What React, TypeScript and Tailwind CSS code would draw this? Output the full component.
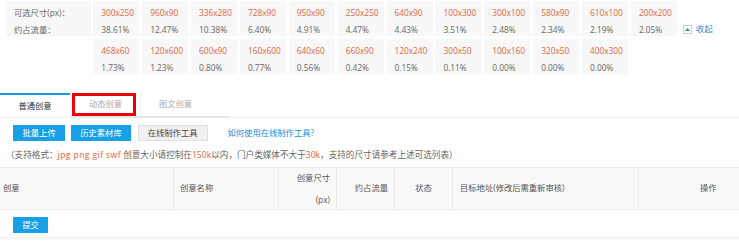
import React from "react";

const row1 = [
  ["300x250", "38.61%"],
  ["960x90", "12.47%"],
  ["336x280", "10.38%"],
  ["728x90", "6.40%"],
  ["950x90", "4.91%"],
  ["250x250", "4.47%"],
  ["640x90", "4.43%"],
  ["100x300", "3.51%"],
  ["300x100", "2.48%"],
  ["580x90", "2.34%"],
  ["610x100", "2.19%"],
  ["200x200", "2.05%"],
];
const row2 = [
  ["468x60", "1.73%"],
  ["120x600", "1.23%"],
  ["600x90", "0.80%"],
  ["160x600", "0.77%"],
  ["640x60", "0.56%"],
  ["660x90", "0.42%"],
  ["120x240", "0.15%"],
  ["300x50", "0.11%"],
  ["100x160", "0.00%"],
  ["320x50", "0.00%"],
  ["400x300", "0.00%"],
];

function Cell({ s, p }: { s: string; p: string }) {
  return (
    <div className="w-[46.2px] h-[35px] shrink-0 bg-[#f8f8f8] pl-[8px] pt-[3px] leading-[17px] whitespace-nowrap">
      <div className="text-[#e4643b]">{s}</div>
      <div className="text-[#666]">{p}</div>
    </div>
  );
}

export default function App() {
  return (
    <div className="relative w-[739px] h-[245px] overflow-hidden bg-white text-[8.3px] text-[#666] font-['Open_Sans','Noto_Sans_CJK_SC',sans-serif] [text-spacing-trim:space-all]">
      {/* size list */}
      <div className="pt-[1px] pl-[6px] flex flex-col gap-[3px]">
        <div className="flex gap-[2.7px]">
          <div className="w-[84.6px] h-[35px] shrink-0 bg-[#f8f8f8] pl-[8px] pt-[3px] leading-[17px] text-[#666] whitespace-nowrap">
            <div>可选尺寸(px)：</div>
            <div>约占流量：</div>
          </div>
          {row1.map(([s, p]) => (
            <Cell key={s} s={s} p={p} />
          ))}
          <div className="ml-[3px] mt-[23px] flex items-center gap-[4px] h-[10px]">
            <span className="w-[9px] h-[9px] border border-[#cfcfcf] bg-white flex items-center justify-center">
              <svg width="5" height="3" viewBox="0 0 5 3">
                <path d="M0 3 L2.5 0 L5 3 Z" fill="#1a8fd8" />
              </svg>
            </span>
            <span className="text-[#1a8fd8] text-[8.5px]">收起</span>
          </div>
        </div>
        <div className="flex gap-[2.7px]">
          <div className="w-[84.6px] shrink-0" />
          {row2.map(([s, p]) => (
            <Cell key={s} s={s} p={p} />
          ))}
        </div>
      </div>

      {/* tabs */}
      <div className="mt-[19px] flex h-[25px] border-b border-[#f3f3f3]">
        <div className="w-[70px] h-[25px] border-t-2 border-[#1a9de0] flex items-center justify-center text-[#333]">
          普通创意
        </div>
        <div className="relative w-[70px] h-[25px] border-l border-[#eeeeee] border-b-2 border-b-[#e6e6e6] flex items-center justify-center text-[#aaa]">
          动态创意
          <div className="absolute left-[1px] top-0 w-[64px] h-[23px] border-[3px] border-[#e8000b]" />
        </div>
        <div className="w-[70px] h-[25px] border-l border-[#eeeeee] border-b-2 border-b-[#e6e6e6] flex items-center justify-center text-[#aaa]">
          图文创意
        </div>
        <div className="w-[20px] h-[25px] border-b-2 border-b-[#e6e6e6]" />
      </div>

      {/* buttons */}
      <div className="mt-[7px] pl-[13px] flex items-center h-[16px]">
        <div className="h-[16px] px-[9.5px] bg-[#18a0e6] text-white flex items-center">批量上传</div>
        <div className="ml-[6px] h-[16px] px-[9px] bg-[#18a0e6] text-white flex items-center">历史素材库</div>
        <div className="ml-[7px] h-[16px] px-[9px] bg-[#f1f1f1] border border-[#e0e0e0] text-[#444] flex items-center">在线制作工具</div>
        <div className="ml-[20px] text-[#1a8fd8]">如何使用在线制作工具?</div>
      </div>

      {/* note */}
      <div className="mt-[8px] pl-[6px] leading-[12px] whitespace-nowrap text-[8.6px]">
        （支持格式：<span className="text-[#e4643b] tracking-[0.4px]">jpg png gif swf</span> 创意大小请控制在
        <span className="text-[#e4643b]">150k</span>以内，门户类媒体不大于
        <span className="text-[#e4643b]">30k</span>，支持的尺寸请参考上述可选列表）
      </div>

      {/* table header */}
      <div className="mt-[6px] flex h-[43px] bg-[#f9f9f9] border-y border-[#ececec] text-[#555]">
        <div className="w-[174px] flex items-center pl-[3px] border-r border-[#ececec]">创意</div>
        <div className="w-[105px] flex items-center pl-[6px] border-r border-[#ececec]">创意名称</div>
        <div className="w-[58px] flex flex-col justify-center items-end pr-[6px] leading-[22px] border-r border-[#ececec]">
          <span>创意尺寸</span>
          <span>(px)</span>
        </div>
        <div className="w-[58px] flex items-center justify-end pr-[6px] border-r border-[#ececec]">约占流量</div>
        <div className="w-[58px] flex items-center justify-center border-r border-[#ececec]">状态</div>
        <div className="w-[186px] flex items-center pl-[7px] border-r border-[#ececec]">目标地址(修改后需重新审核)</div>
        <div className="w-[100px] flex items-center pl-[61px]">操作</div>
      </div>

      {/* submit */}
      <div className="pt-[7px] pb-[4px] pl-[13px] border-b-2 border-[#f5f5f5]">
        <div className="w-[35px] h-[16px] bg-[#18a0e6] text-white flex items-center justify-center">提交</div>
      </div>
    </div>
  );
}
